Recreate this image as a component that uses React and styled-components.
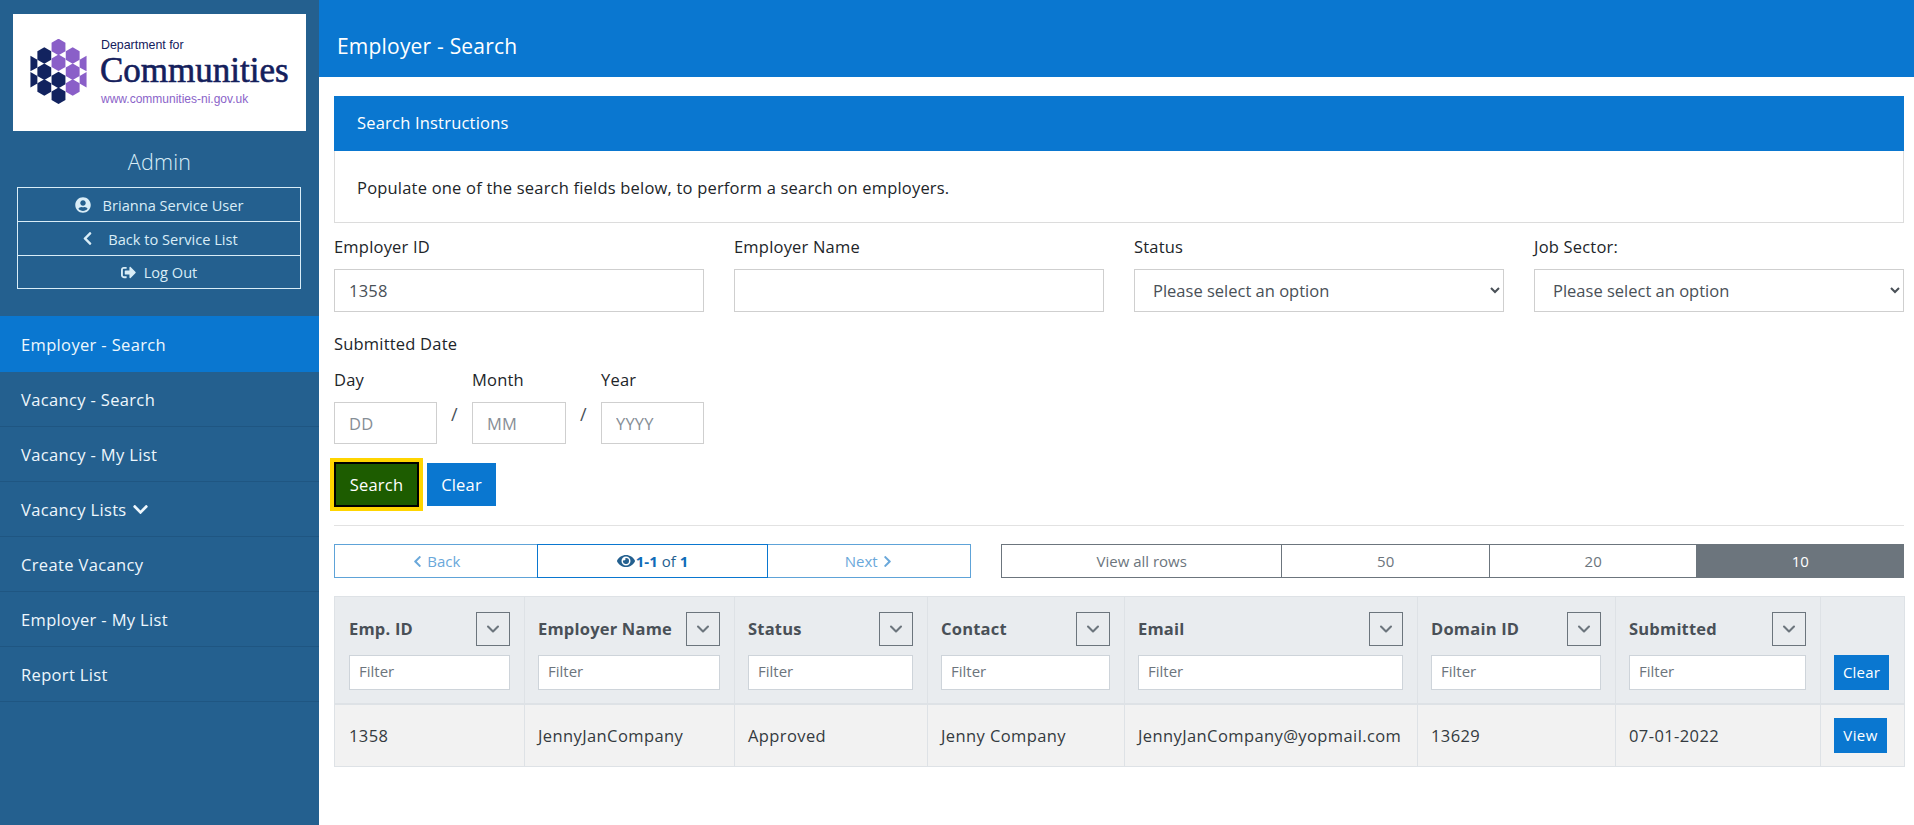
import React from "react";
import styled, { createGlobalStyle } from "styled-components";
import { FaUserCircle, FaChevronLeft, FaChevronRight, FaChevronDown, FaSignOutAlt, FaEye } from "react-icons/fa";
import { ChevronDown } from "lucide-react";

const GlobalStyle = createGlobalStyle`
  html, body { margin: 0; padding: 0; background: #fff; }
  body {
    font-family: "Open Sans", "Noto Sans", "Liberation Sans", sans-serif;
    font-size: 16.5px;
    letter-spacing: 0.2px;
    color: #212529;
  }
  * { box-sizing: border-box; }
`;

const Page = styled.div`
  display: flex;
  min-height: 825px;
  overflow: hidden;
`;

const Sidebar = styled.aside`
  flex: 0 0 319px;
  background: #24608f;
  padding-top: 14px;
  color: #fff;
`;

const LogoBox = styled.div`
  margin: 0 13px;
  height: 117px;
  background: #fff;
  display: flex;
  align-items: flex-start;
  padding: 25px 0 0 17px;
`;

const LogoText = styled.div`
  margin-left: 13px;
  margin-top: -1px;
  display: flex;
  flex-direction: column;
  letter-spacing: 0;
`;

const LogoDept = styled.span`
  font-family: "Liberation Sans", sans-serif;
  font-size: 12.4px;
  line-height: 14px;
  margin-left: 1px;
  color: #14205c;
`;

const LogoName = styled.span`
  font-family: "Liberation Serif", serif;
  font-size: 35px;
  line-height: 38px;
  color: #14205c;
  -webkit-text-stroke: 0.6px #14205c;
`;

const LogoUrl = styled.span`
  font-family: "Liberation Sans", sans-serif;
  font-size: 12px;
  line-height: 15px;
  margin: 2px 0 0 1px;
  color: #8a63c9;
`;

const RoleTitle = styled.div`
  margin-top: 17px;
  text-align: center;
  font-size: 21.5px;
  font-weight: 300;
  line-height: 28px;
  color: #d9edf7;
`;

const UserBox = styled.div`
  margin: 11px 18px 0 17px;
  border: 1px solid #d9edf7;
`;

const UserRow = styled.div`
  height: ${({ $h }) => $h}px;
  display: flex;
  align-items: center;
  justify-content: center;
  gap: ${({ $gap }) => $gap}px;
  font-size: 14.6px;
  letter-spacing: 0;
  color: #d9edf7;
  border-top: ${({ $first }) => ($first ? "none" : "1px solid #d9edf7")};
`;

const Nav = styled.nav`
  margin-top: 27px;
`;

const NavItem = styled.a`
  display: flex;
  align-items: center;
  gap: 5px;
  height: ${({ $active }) => ($active ? "56px" : "55px")};
  padding-left: 21px;
  font-size: 16.5px;
  letter-spacing: 0.35px;
  color: #eef7fd;
  background: ${({ $active }) => ($active ? "#0a77d0" : "transparent")};
  border-bottom: ${({ $active }) => ($active ? "none" : "1px solid #1f5682")};
`;

const Main = styled.main`
  flex: 1;
  min-width: 0;
`;

const TopBar = styled.header`
  height: 77px;
  background: #0a77d0;
  color: #fff;
  display: flex;
  align-items: center;
  padding: 14px 0 0 18px;
  font-size: 21px;
`;

const Content = styled.div`
  padding: 19px 10px 0 15px;
`;

const Panel = styled.section`
  border: 1px solid #dcdcdc;
  border-top: none;
`;

const PanelHeading = styled.div`
  height: 55px;
  margin: 0 -1px;
  padding: 0 0 2px 23px;
  display: flex;
  align-items: center;
  background: #0a77d0;
  color: #fff;
  font-size: 16.5px;
`;

const PanelBody = styled.div`
  height: 71px;
  padding: 1px 0 0 22px;
  display: flex;
  align-items: center;
`;

const FieldGrid = styled.div`
  display: grid;
  grid-template-columns: repeat(4, 370px);
  column-gap: 30px;
  margin-top: 12px;
`;

const Field = styled.div`
  display: flex;
  flex-direction: column;
`;

const Label = styled.label`
  height: 24px;
  line-height: 24px;
  margin-bottom: 10px;
  color: #212529;
`;

const TextInput = styled.input`
  height: ${({ $short }) => ($short ? "42px" : "43px")};
  width: ${({ $w }) => ($w ? `${$w}px` : "100%")};
  padding: 0 14px;
  border: 1px solid #cfcfcf;
  border-radius: 0;
  font: inherit;
  letter-spacing: inherit;
  color: #495057;
  outline: none;
  &::placeholder { color: #868e96; opacity: 1; }
`;

const Select = styled.select`
  height: 43px;
  width: 100%;
  padding: 0 14px;
  border: 1px solid #cfcfcf;
  border-radius: 0;
  background: #fff;
  font: inherit;
  color: #495057;
  outline: none;
`;

const DateLegend = styled.div`
  margin-top: 19px;
  height: 24px;
  line-height: 26px;
`;

const DateRow = styled.div`
  display: flex;
  margin-top: 13px;
`;

const Slash = styled.span`
  flex: 0 0 35px;
  text-align: center;
  padding-top: 34px;
  font-size: 18px;
  color: #495057;
`;

const Buttons = styled.div`
  display: flex;
  align-items: center;
  gap: 8px;
  height: 43px;
  margin-top: 19px;
`;

const SearchButton = styled.button`
  width: 85px;
  height: 45px;
  background: #1d5c00;
  border: 2px solid #000;
  box-shadow: 0 0 0 4px #ffd500;
  color: #fff;
  font: inherit;
  letter-spacing: inherit;
  padding: 0;
`;

const BlueButton = styled.button`
  height: ${({ $h }) => $h}px;
  width: ${({ $w }) => $w}px;
  background: #0a77d0;
  border: none;
  color: #fff;
  font: inherit;
  font-weight: 400;
  letter-spacing: inherit;
  font-size: ${({ $size }) => $size}px;
  padding: 0;
`;

const Divider = styled.hr`
  margin: 19px 0 18px;
  border: none;
  border-top: 1px solid #e2e2e2;
`;

const ControlsRow = styled.div`
  display: flex;
  justify-content: space-between;
`;

const Pager = styled.div`
  display: flex;
  width: 637px;
  height: 34px;
`;

const PagerCell = styled.div`
  width: ${({ $w }) => $w}px;
  margin-left: ${({ $first }) => ($first ? 0 : "-1px")};
  display: flex;
  align-items: center;
  justify-content: center;
  gap: ${({ $main }) => ($main ? 1 : 3)}px;
  font-size: 15px;
  letter-spacing: 0;
  color: ${({ $main }) => ($main ? "#24608f" : "#6aa8da")};
  border: 1px solid ${({ $main }) => ($main ? "#0a77d0" : "#5ea3d8")};
  position: relative;
  z-index: ${({ $main }) => ($main ? 1 : 0)};
  b { color: #0f6cb8; font-weight: 700; }
`;

const RowsGroup = styled.div`
  display: flex;
  width: 903px;
  height: 34px;
  border: 1px solid #6c757d;
`;

const RowsCell = styled.div`
  width: ${({ $w }) => $w}px;
  display: flex;
  align-items: center;
  justify-content: center;
  font-size: 15px;
  letter-spacing: 0;
  color: ${({ $active }) => ($active ? "#fff" : "#6c757d")};
  background: ${({ $active }) => ($active ? "#6c757d" : "#fff")};
  border-left: ${({ $first }) => ($first ? "none" : "1px solid #6c757d")};
`;

const Table = styled.table`
  width: 1570px;
  margin-top: 18px;
  table-layout: fixed;
  border-collapse: collapse;
`;

const Th = styled.th`
  height: 107px;
  padding: 14px 14px 13px 13px;
  background: #e9ecef;
  border: 1px solid #dee2e6;
  border-bottom-width: 2px;
  text-align: left;
  vertical-align: bottom;
  &:first-child { padding-left: 14px; }
`;

const ThTop = styled.div`
  display: flex;
  align-items: center;
  justify-content: space-between;
  margin-bottom: 9px;
  font-size: 16.5px;
  font-weight: 700;
  letter-spacing: 0.2px;
  color: #495057;
  white-space: nowrap;
`;

const SortButton = styled.button`
  width: 34px;
  height: 34px;
  padding: 0;
  display: flex;
  align-items: center;
  justify-content: center;
  background: transparent;
  border: 1px solid #6c757d;
  color: #6c757d;
`;

const FilterInput = styled.input`
  display: block;
  width: 100%;
  height: 35px;
  padding: 0 9px 2px;
  background: #fff;
  border: 1px solid #ced4da;
  border-radius: 0;
  font: inherit;
  font-weight: 400;
  font-size: 15px;
  outline: none;
  &::placeholder { color: #6c757d; opacity: 1; }
`;

const Td = styled.td`
  height: 63px;
  padding: 0 0 0 13px;
  background: #f2f2f2;
  border: 1px solid #dee2e6;
  font-size: 16.5px;
  letter-spacing: 0.4px;
  color: #343a40;
  white-space: nowrap;
  &:first-child { padding-left: 14px; }
`;

const columns = [
  { title: "Emp. ID", width: 190 },
  { title: "Employer Name", width: 210 },
  { title: "Status", width: 193 },
  { title: "Contact", width: 197 },
  { title: "Email", width: 293 },
  { title: "Domain ID", width: 198 },
  { title: "Submitted", width: 205 },
];

const rowValues = ["1358", "JennyJanCompany", "Approved", "Jenny Company", "JennyJanCompany@yopmail.com", "13629", "07-01-2022"];

const navItems = ["Vacancy - Search", "Vacancy - My List", "Vacancy Lists", "Create Vacancy", "Employer - My List", "Report List"];

const navyHex = [[104, 136], [104, 185], [104, 233], [147, 210], [147, 258]];
const purpleHex = [[147, 110], [147, 158], [190, 136], [190, 185], [190, 233]];

const hexPoints = ([x, y]) =>
  `${x},${y - 25} ${x + 21},${y - 13} ${x + 21},${y + 13} ${x},${y + 25} ${x - 21},${y + 13} ${x - 21},${y - 13}`;

function Honeycomb() {
  return (
    <svg width="57" height="66" viewBox="62 86 170 200">
      {navyHex.map((c) => <polygon key={c.join()} points={hexPoints(c)} fill="#12235f" />)}
      {purpleHex.map((c) => <polygon key={c.join()} points={hexPoints(c)} fill="#8a5fc8" />)}
      <polygon points="62,137 83,149 83,172 62,184" fill="#12235f" />
      <polygon points="62,186 83,198 83,221 62,233" fill="#12235f" />
      <polygon points="232,137 211,149 211,172 232,184" fill="#8a5fc8" />
      <polygon points="232,186 211,198 211,221 232,233" fill="#8a5fc8" />
    </svg>
  );
}

function App() {
  return (
    <Page>
      <GlobalStyle />
      <Sidebar>
        <LogoBox>
          <Honeycomb />
          <LogoText>
            <LogoDept>Department for</LogoDept>
            <LogoName>Communities</LogoName>
            <LogoUrl>www.communities-ni.gov.uk</LogoUrl>
          </LogoText>
        </LogoBox>
        <RoleTitle>Admin</RoleTitle>
        <UserBox>
          <UserRow $first $h={33} $gap={12}><FaUserCircle size={16} />Brianna Service User</UserRow>
          <UserRow $h={34} $gap={13}><FaChevronLeft size={15} />Back to Service List</UserRow>
          <UserRow $h={33} $gap={8}><FaSignOutAlt size={15} />Log Out</UserRow>
        </UserBox>
        <Nav>
          <NavItem $active>Employer - Search</NavItem>
          {navItems.map((item) => (
            <NavItem key={item}>
              {item}
              {item === "Vacancy Lists" && <FaChevronDown size={17} />}
            </NavItem>
          ))}
        </Nav>
      </Sidebar>
      <Main>
        <TopBar>Employer - Search</TopBar>
        <Content>
          <Panel>
            <PanelHeading>Search Instructions</PanelHeading>
            <PanelBody>Populate one of the search fields below, to perform a search on employers.</PanelBody>
          </Panel>
          <FieldGrid>
            <Field>
              <Label>Employer ID</Label>
              <TextInput defaultValue="1358" />
            </Field>
            <Field>
              <Label>Employer Name</Label>
              <TextInput />
            </Field>
            <Field>
              <Label>Status</Label>
              <Select><option>Please select an option</option></Select>
            </Field>
            <Field>
              <Label>Job Sector:</Label>
              <Select><option>Please select an option</option></Select>
            </Field>
          </FieldGrid>
          <DateLegend>Submitted Date</DateLegend>
          <DateRow>
            <Field>
              <Label>Day</Label>
              <TextInput $short $w={103} placeholder="DD" />
            </Field>
            <Slash>/</Slash>
            <Field>
              <Label>Month</Label>
              <TextInput $short $w={94} placeholder="MM" />
            </Field>
            <Slash>/</Slash>
            <Field>
              <Label>Year</Label>
              <TextInput $short $w={103} placeholder="YYYY" />
            </Field>
          </DateRow>
          <Buttons>
            <SearchButton>Search</SearchButton>
            <BlueButton $w={69} $h={43} $size={16.5}>Clear</BlueButton>
          </Buttons>
          <Divider />
          <ControlsRow>
            <Pager>
              <PagerCell $first $w={204}><FaChevronLeft size={13} />Back</PagerCell>
              <PagerCell $main $w={232}><FaEye size={18} /><span><b>1-1</b> of <b>1</b></span></PagerCell>
              <PagerCell $w={204}>Next<FaChevronRight size={13} /></PagerCell>
            </Pager>
            <RowsGroup>
              <RowsCell $first $w={280}>View all rows</RowsCell>
              <RowsCell $w={208}>50</RowsCell>
              <RowsCell $w={208}>20</RowsCell>
              <RowsCell $active $w={207}>10</RowsCell>
            </RowsGroup>
          </ControlsRow>
          <Table>
            <colgroup>
              {columns.map((col) => <col key={col.title} width={col.width} />)}
              <col width={84} />
            </colgroup>
            <thead>
              <tr>
                {columns.map((col) => (
                  <Th key={col.title}>
                    <ThTop>
                      {col.title}
                      <SortButton><ChevronDown size={20} strokeWidth={2.5} /></SortButton>
                    </ThTop>
                    <FilterInput placeholder="Filter" />
                  </Th>
                ))}
                <Th><BlueButton $w={55} $h={35} $size={15}>Clear</BlueButton></Th>
              </tr>
            </thead>
            <tbody>
              <tr>
                {rowValues.map((value) => <Td key={value}>{value}</Td>)}
                <Td><BlueButton $w={53} $h={35} $size={15}>View</BlueButton></Td>
              </tr>
            </tbody>
          </Table>
        </Content>
      </Main>
    </Page>
  );
}

export default App;
